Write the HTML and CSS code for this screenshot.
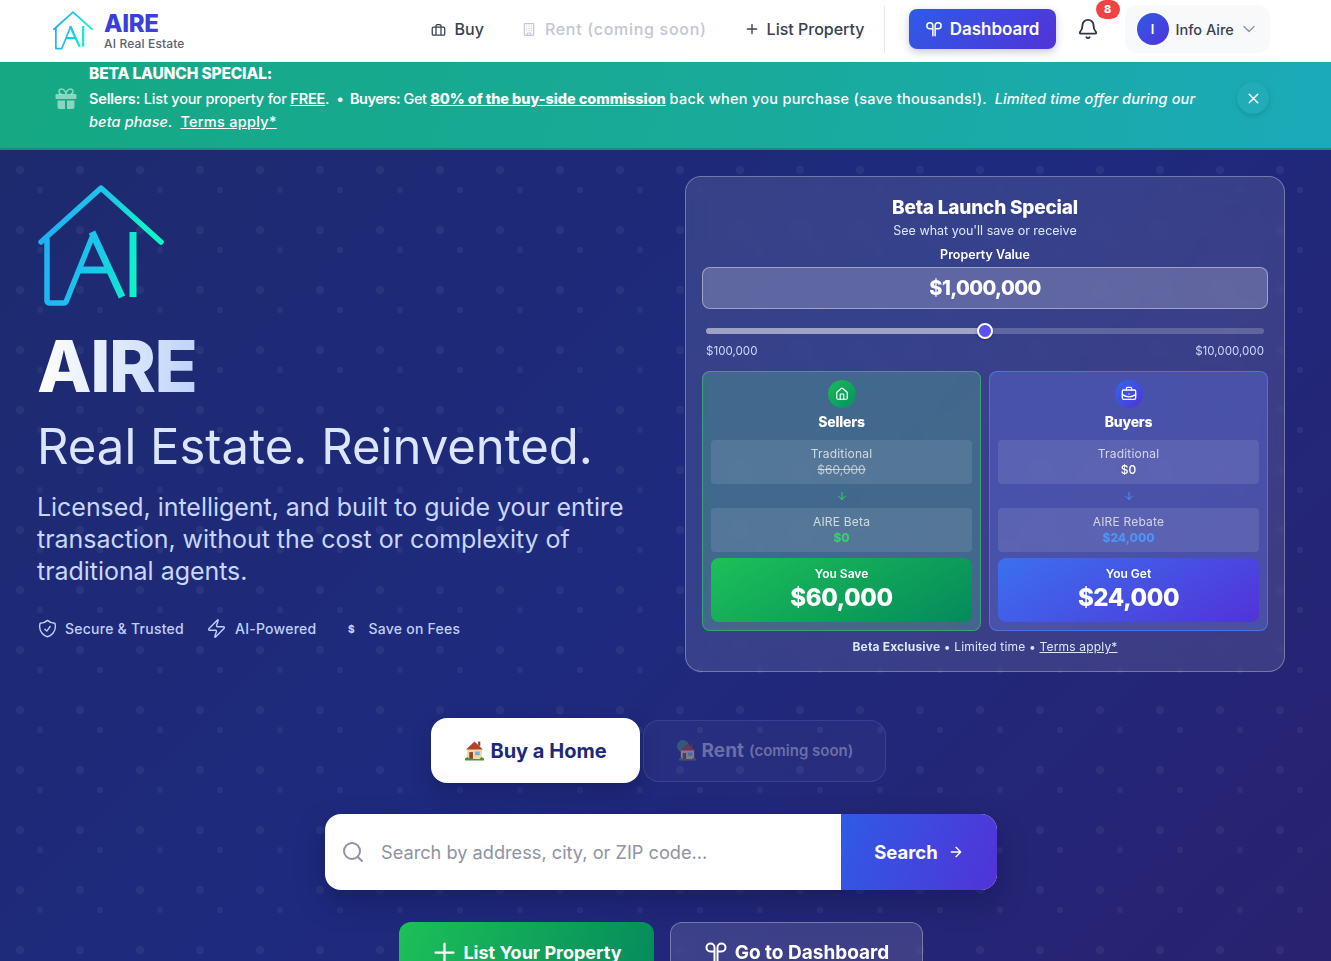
FILE: index.html
```html
<!DOCTYPE html>
<html lang="en">
<head>
    <meta charset="UTF-8">
    <meta name="viewport" content="width=device-width, initial-scale=1.0">
    <title>AIRE - AI Real Estate</title>
    <link rel="stylesheet" href="styles.css">
</head>
<body>

    <svg class="defs" width="0" height="0" aria-hidden="true">
        <defs>
            <linearGradient id="logo-grad" gradientUnits="userSpaceOnUse" x1="0" y1="60" x2="102" y2="75">
                <stop offset="0" stop-color="#1fb0f2"/>
                <stop offset="0.6" stop-color="#1cc8ea"/>
                <stop offset="1" stop-color="#0cf5c8"/>
            </linearGradient>
            <symbol id="logo-mark" viewBox="0 0 126 122">
                <g fill="none" stroke="url(#logo-grad)" stroke-width="5.5" stroke-linecap="round" stroke-linejoin="round">
                    <path d="M3 57 63 3 123 57"/>
                    <path d="M9 55V116a2 2 0 0 0 2 2H26a2 2 0 0 0 2-1L55 50"/>
                </g>
                <g fill="none" stroke="url(#logo-grad)" stroke-width="7">
                    <path d="M54 47 84 112"/>
                    <path d="M41 85H70"/>
                    <path d="M95 47V112"/>
                </g>
            </symbol>
            <symbol id="sprout" viewBox="0 0 24 24">
                <g fill="none" stroke="currentColor" stroke-width="2" stroke-linecap="round" stroke-linejoin="round">
                    <path d="M10.500 21V7.500a4 4 0 1 0-4 4h4"/>
                    <path d="M13.500 21V7.500a4 4 0 1 1 4 4h-4"/>
                </g>
            </symbol>
            <symbol id="house-emoji" viewBox="0 0 20 20">
                <rect x="13.500" y="1.500" width="2" height="4" fill="#8e3b2c"/>
                <rect x="3" y="8" width="14" height="10" fill="#f3d6a0"/>
                <path d="M10 1.500 2 9h16z" fill="#b5402f"/>
                <rect x="5" y="11.500" width="3.500" height="6.500" fill="#8a4b2d"/>
                <rect x="10.500" y="11" width="4.500" height="3.500" fill="#6fb3e0"/>
                <path d="M1 19.500a2 2 0 0 1 4-1.500h10a2 2 0 0 1 4 1.500z" fill="#4d8f3a"/>
            </symbol>
        </defs>
    </svg>

    <header class="topbar">
        <a class="brand">
            <span class="brand-logo"><svg width="40" height="39"><use href="#logo-mark"/></svg></span>
            <span class="brand-text">
                <span class="brand-name">AIRE</span>
                <span class="brand-sub">AI Real Estate</span>
            </span>
        </a>
        <nav class="nav">
            <a class="nav-link nav-buy">
                <svg class="ico" width="15" height="15" viewBox="0 0 24 24"><path d="M16 20V6a2 2 0 0 0-2-2h-4a2 2 0 0 0-2 2v14"/><rect x="2" y="8" width="20" height="13" rx="2"/></svg>
                Buy
            </a>
            <a class="nav-link nav-rent">
                <svg class="ico" width="14" height="15" viewBox="0 0 24 24"><rect x="4" y="2" width="16" height="20" rx="1"/><path d="M9 22v-4h6v4M8 6h.01M16 6h.01M12 6h.01M12 10h.01M12 14h.01M16 10h.01M16 14h.01M8 10h.01M8 14h.01"/></svg>
                Rent (coming soon)
            </a>
            <a class="nav-link nav-list">
                <svg class="ico" width="16" height="16" viewBox="0 0 24 24"><path d="M5 12h14M12 5v14"/></svg>
                List Property
            </a>
        </nav>
        <span class="nav-divider"></span>
        <a class="dash-btn"><svg width="18" height="18"><use href="#sprout"/></svg>Dashboard</a>
        <span class="bell">
            <svg class="ico" width="22" height="22" viewBox="0 0 24 24"><path d="M10.268 21a2 2 0 0 0 3.464 0"/><path d="M3.262 15.326A1 1 0 0 0 4 17h16a1 1 0 0 0 .74-1.673C19.41 13.956 18 12.499 18 8A6 6 0 0 0 6 8c0 4.499-1.411 5.956-2.738 7.326"/></svg>
            <span class="badge">8</span>
        </span>
        <div class="user">
            <span class="avatar">I</span>
            <span class="user-name">Info Aire</span>
            <svg class="ico" width="20" height="20" viewBox="0 0 24 24"><path d="m6 9 6 6 6-6"/></svg>
        </div>
    </header>

    <section class="promo">
        <svg class="promo-gift" width="24" height="24" viewBox="0 0 24 24"><rect x="1.500" y="7" width="21" height="5" rx="1"/><path d="M3.500 13.500h7.500V22H5.500a2 2 0 0 1-2-2zM13 13.500h7.500V20a2 2 0 0 1-2 2H13z"/><path class="bow" d="M7.500 7a2.500 2.500 0 0 1 0-5C10 2 12 5 12 7c0-2 2-5 4.500-5a2.500 2.500 0 0 1 0 5"/></svg>
        <div class="promo-text">
            <strong class="promo-title">BETA LAUNCH SPECIAL:</strong>
            <p>
                <span class="tight"><b>Sellers:</b> List your property for <a><b>FREE</b></a>.</span><span class="sep">•</span><span class="tighter"><b>Buyers:</b> Get</span> <a><b class="x">80% of the buy-side commission</b></a> <span class="wide">back when you purchase (save thousands!).</span> &nbsp;<em class="wide-em">Limited time offer during our</em><br>
                <em class="wide-em">beta phase.</em> &nbsp;<a class="wide">Terms apply*</a>
            </p>
        </div>
        <span class="promo-close">
            <svg class="ico" width="17" height="17" viewBox="0 0 24 24"><path d="M18 6 6 18M6 6l12 12"/></svg>
        </span>
    </section>

    <main class="hero">
        <div class="hero-top">
            <div class="hero-left">
                <svg class="hero-logo" width="126" height="122"><use href="#logo-mark"/></svg>
                <h1 class="hero-name">AIRE</h1>
                <h2 class="hero-tag">Real Estate. Reinvented.</h2>
                <p class="hero-sub">Licensed, intelligent, and built to guide your entire transaction, without the cost or complexity of traditional agents.</p>
                <ul class="features">
                    <li>
                        <svg class="ico thin" width="21" height="21" viewBox="0 0 24 24"><path d="M9 12.750 11.250 15 15 9.750m-3-7.036A11.959 11.959 0 0 1 3.598 6 11.990 11.990 0 0 0 3 9.749c0 5.592 3.824 10.290 9 11.623 5.176-1.332 9-6.030 9-11.622 0-1.310-.21-2.571-.598-3.751h-.152c-3.196 0-6.100-1.248-8.250-3.285Z"/></svg>
                        Secure &amp; Trusted
                    </li>
                    <li>
                        <svg class="ico thin" width="21" height="21" viewBox="0 0 24 24"><path d="M4 14a1 1 0 0 1-.78-1.630l9.900-10.200a.5.5 0 0 1 .86.46l-1.920 6.020A1 1 0 0 0 13 10h7a1 1 0 0 1 .78 1.630l-9.900 10.200a.5.5 0 0 1-.86-.46l1.920-6.020A1 1 0 0 0 11 14z"/></svg>
                        AI-Powered
                    </li>
                    <li>
                        <span class="dollar">$</span>
                        Save on Fees
                    </li>
                </ul>
            </div>

            <aside class="calc">
                <h3 class="calc-title">Beta Launch Special</h3>
                <p class="calc-sub">See what you'll save or receive</p>
                <div class="calc-label">Property Value</div>
                <div class="calc-value">$1,000,000</div>
                <div class="slider"><span class="slider-fill"></span><span class="slider-thumb"></span></div>
                <div class="slider-range"><span>$100,000</span><span>$10,000,000</span></div>

                <div class="compare">
                    <div class="side side-sell">
                        <span class="side-icon">
                            <svg class="ico" width="14" height="14" viewBox="0 0 24 24"><path d="M15 21v-8a1 1 0 0 0-1-1h-4a1 1 0 0 0-1 1v8"/><path d="M3 10a2 2 0 0 1 .709-1.528l7-5.999a2 2 0 0 1 2.582 0l7 5.999A2 2 0 0 1 21 10v9a2 2 0 0 1-2 2H5a2 2 0 0 1-2-2z"/></svg>
                        </span>
                        <h4>Sellers</h4>
                        <div class="line"><span>Traditional</span><s>$60,000</s></div>
                        <svg class="ico arrow" width="12" height="12" viewBox="0 0 24 24"><path d="M12 5v14M19 12l-7 7-7-7"/></svg>
                        <div class="line"><span>AIRE Beta</span><b>$0</b></div>
                        <div class="total"><span>You Save</span><strong>$60,000</strong></div>
                    </div>
                    <div class="side side-buy">
                        <span class="side-icon">
                            <svg class="ico" width="16" height="16" viewBox="0 0 24 24"><path d="M12 12h.01"/><path d="M16 6V4a2 2 0 0 0-2-2h-4a2 2 0 0 0-2 2v2"/><path d="M22 13a18.150 18.150 0 0 1-20 0"/><rect x="2" y="6" width="20" height="14" rx="2"/></svg>
                        </span>
                        <h4>Buyers</h4>
                        <div class="line"><span>Traditional</span><i>$0</i></div>
                        <svg class="ico arrow" width="12" height="12" viewBox="0 0 24 24"><path d="M12 5v14M19 12l-7 7-7-7"/></svg>
                        <div class="line"><span>AIRE Rebate</span><b>$24,000</b></div>
                        <div class="total"><span>You Get</span><strong>$24,000</strong></div>
                    </div>
                </div>
                <p class="calc-foot"><b>Beta Exclusive</b> • Limited time • <a>Terms apply*</a></p>
            </aside>
        </div>

        <div class="tabs">
            <button class="tab tab-on"><svg width="21" height="21"><use href="#house-emoji"/></svg>Buy a Home</button>
            <button class="tab tab-off">
                <svg width="21" height="21" viewBox="0 0 21 21"><circle cx="7" cy="6" r="6" fill="#3f8f7a"/><use href="#house-emoji" x="2" y="2" width="19" height="19"/></svg>
                Rent <small>(coming soon)</small>
            </button>
        </div>

        <form class="search">
            <svg class="ico" width="24" height="24" viewBox="0 0 24 24"><circle cx="11" cy="11" r="8"/><path d="m21 21-4.300-4.300"/></svg>
            <input type="text" placeholder="Search by address, city, or ZIP code...">
            <button type="button">Search <svg class="ico" width="16" height="16" viewBox="0 0 24 24"><path d="M5 12h14M12 5l7 7-7 7"/></svg></button>
        </form>

        <div class="actions">
            <a class="cta cta-green"><svg class="ico" width="27" height="27" viewBox="0 0 24 24"><path d="M4 12h16M12 4v16"/></svg>List Your Property</a>
            <a class="cta cta-ghost"><svg width="24" height="24"><use href="#sprout"/></svg>Go to Dashboard</a>
        </div>
    </main>

</body>
</html>
```

FILE: styles.css
```css
* {
    box-sizing: border-box;
}
html, body {
    height: 961px;
    overflow: hidden;
}
body {
    margin: 0;
    font-family: 'Inter', 'Liberation Sans', sans-serif;
    color: #374151;
    background-color: #1e2a78;
}
h1, h2, h3, h4, p, ul {
    margin: 0;
    padding: 0;
}
ul {
    list-style: none;
}
.defs {
    position: absolute;
}
.ico {
    fill: none;
    stroke: currentColor;
    stroke-width: 2;
    stroke-linecap: round;
    stroke-linejoin: round;
    flex: none;
}
.ico.thin {
    stroke-width: 1.600;
}

/* top bar */
.topbar {
    height: 62px;
    background-color: #fff;
    display: flex;
    align-items: center;
    padding: 0 0 4px 53px;
}
.brand {
    display: flex;
    align-items: center;
    gap: 10px;
    margin-top: 2px;
}
.brand-logo {
    width: 41px;
    height: 39px;
    display: block;
}
.brand-text {
    display: flex;
    flex-direction: column;
}
.brand-name {
    font-size: 24px;
    line-height: 26px;
    font-weight: 800;
    color: #3b3fdc;
    letter-spacing: -0.3px;
}
.brand-sub {
    font-size: 12px;
    line-height: 13px;
    font-weight: 500;
    color: #5b6270;
    letter-spacing: 0.15px;
}
.nav {
    display: flex;
    align-items: center;
    margin-left: 246px;
    gap: 38px;
}
.nav-link {
    display: flex;
    align-items: center;
    gap: 9px;
    font-size: 16px;
    font-weight: 500;
    white-space: nowrap;
}
.nav-rent {
    color: #c3c7d3;
    letter-spacing: 0.7px;
}
.nav-list {
    gap: 7px;
    margin-left: -1px;
}
.nav-divider {
    width: 1px;
    height: 47px;
    background-color: #e5e7eb;
    margin-left: 19px;
}
.dash-btn {
    width: 147px;
    height: 40px;
    margin-left: 24px;
    border-radius: 8px;
    background: linear-gradient(135deg, #2f5be6, #5133d8);
    color: #fff;
    font-size: 17px;
    font-weight: 600;
    display: flex;
    align-items: center;
    justify-content: center;
    gap: 7px;
    box-shadow: 0 3px 8px rgba(40, 40, 120, 0.25);
}
.bell {
    position: relative;
    width: 22px;
    height: 22px;
    margin-left: 21px;
    color: #2f3542;
}
.badge {
    position: absolute;
    left: 19px;
    top: -18px;
    width: 24px;
    height: 19px;
    border-radius: 10px;
    background-color: #ef4444;
    color: #fff;
    font-size: 11px;
    line-height: 19px;
    font-weight: 800;
    text-align: center;
}
.user {
    width: 145px;
    height: 48px;
    margin-left: 26px;
    border-radius: 12px;
    background-color: #f8f9fb;
    display: flex;
    align-items: center;
    padding-left: 12px;
}
.avatar {
    width: 32px;
    height: 32px;
    border-radius: 50%;
    background: linear-gradient(135deg, #2f5be6, #5133d8);
    color: #fff;
    font-size: 13px;
    font-weight: 600;
    line-height: 32px;
    text-align: center;
}
.user-name {
    margin-left: 7px;
    font-size: 14.500px;
    font-weight: 500;
    color: #374151;
}
.user .ico {
    margin-left: 5px;
    color: #8b909c;
    stroke-width: 1.500;
}

/* promo strip */
.promo {
    height: 88px;
    background: linear-gradient(100deg, #15a882, #19aa9a 55%, #1baab9);
    border-bottom: 2px solid #0f8f85;
    display: flex;
    color: #fff;
    padding-left: 54px;
    position: relative;
}
.promo-gift {
    margin-top: 25px;
    fill: rgba(255, 255, 255, 0.5);
    flex: none;
}
.promo-gift .bow {
    fill: none;
    stroke: rgba(255, 255, 255, 0.5);
    stroke-width: 1.500;
}
.promo-text {
    margin-left: 11px;
    padding-top: 1px;
    width: 1130px;
    font-size: 14.500px;
    line-height: 23px;
    font-weight: 500;
}
.promo-title {
    display: block;
    font-size: 15.500px;
    line-height: 22px;
    font-weight: 800;
    letter-spacing: -0.15px;
}
.promo-text p {
    margin-top: 2px;
    white-space: nowrap;
}
.promo-text a {
    text-decoration: underline;
}
.promo-text b {
    font-weight: 600;
}
.promo-text b.x {
    font-weight: 800;
    letter-spacing: -0.06px;
}
.tight {
    letter-spacing: -0.18px;
}
.tighter {
    letter-spacing: -0.5px;
}
.wide {
    letter-spacing: 0.28px;
}
.wide-em {
    letter-spacing: 0.12px;
}
.sep {
    margin: 0 6px 0 7px;
}
.promo-close {
    position: absolute;
    left: 1237px;
    top: 20px;
    width: 32px;
    height: 32px;
    border-radius: 50%;
    background-color: rgba(255, 255, 255, 0.03);
    box-shadow: 0 2px 5px rgba(0, 90, 100, 0.25);
    display: flex;
    align-items: center;
    justify-content: center;
}

/* hero */
.hero {
    height: 811px;
    overflow: hidden;
    padding: 26px 46px 0 37px;
    background-color: transparent;
    background-image:
        radial-gradient(circle at 20px 20px, rgba(255, 255, 255, 0.05) 4px, transparent 4.500px),
        radial-gradient(circle at 40px 40px, rgba(255, 255, 255, 0.05) 3px, transparent 3.500px),
        linear-gradient(135deg, #1e2a6e, #1e2a7e 50%, #292270);
    background-size: 60px 60px, 60px 60px, 100% 100%;
}
.hero-top {
    display: grid;
    grid-template-columns: 1fr 600px;
}
.hero-left {
    padding-top: 9px;
}
.hero-logo {
    display: block;
    margin-left: 1px;
}
.hero-name {
    margin-top: 23px;
    font-size: 71px;
    line-height: 72px;
    font-weight: 800;
    letter-spacing: -1.500px;
    width: 158px;
    background: linear-gradient(90deg, #fff, #bfd4fa);
    -webkit-background-clip: text;
    background-clip: text;
    color: transparent;
}
.hero-tag {
    margin-top: 17px;
    font-size: 49px;
    line-height: 56px;
    font-weight: 400;
    color: #dbe6fe;
}
.hero-sub {
    margin-top: 16px;
    width: 600px;
    font-size: 25px;
    line-height: 32px;
    font-weight: 400;
    letter-spacing: -0.04px;
    color: #c7d6fe;
}
.features {
    margin-top: 31px;
    display: flex;
    gap: 22px;
    font-size: 14px;
    line-height: 20px;
    font-weight: 500;
    letter-spacing: 0.25px;
    color: #bfd0fb;
}
.features li {
    display: flex;
    align-items: center;
    gap: 7px;
}
.features li:nth-child(2) {
    gap: 8px;
}
.features li:last-child {
    gap: 4px;
}
.dollar {
    width: 26px;
    font-size: 10px;
    font-weight: 800;
    text-align: center;
}

/* calculator card */
.calc {
    height: 496px;
    border: 1px solid rgba(255, 255, 255, 0.3);
    border-radius: 16px;
    background-color: rgba(255, 255, 255, 0.11);
    backdrop-filter: blur(10px);
    padding: 17px 16px 0;
    text-align: center;
    color: #fff;
}
.calc-title {
    font-size: 19px;
    line-height: 28px;
    font-weight: 800;
    letter-spacing: -0.2px;
}
.calc-sub {
    margin-top: -1px;
    font-size: 12.500px;
    line-height: 20px;
    color: #dbe6fe;
}
.calc-label {
    margin-top: 4px;
    font-size: 12.500px;
    line-height: 20px;
    font-weight: 600;
}
.calc-value {
    margin-top: 2px;
    height: 42px;
    border: 1px solid rgba(255, 255, 255, 0.4);
    border-radius: 8px;
    background-color: rgba(255, 255, 255, 0.2);
    font-size: 20px;
    line-height: 40px;
    font-weight: 800;
    letter-spacing: -0.6px;
}
.slider {
    position: relative;
    height: 6px;
    margin: 19px 4px 0;
    border-radius: 3px;
    background-color: rgba(255, 255, 255, 0.2);
}
.slider-fill {
    display: block;
    width: 50%;
    height: 100%;
    border-radius: 3px;
    background-color: rgba(255, 255, 255, 0.4);
}
.slider-thumb {
    position: absolute;
    left: 271px;
    top: -5px;
    width: 16px;
    height: 16px;
    border: 2px solid #fff;
    border-radius: 50%;
    background-color: #5b50f0;
    box-shadow: 0 1px 3px rgba(0, 0, 0, 0.3);
}
.slider-range {
    display: flex;
    justify-content: space-between;
    margin: 8px 4px 0;
    font-size: 11.600px;
    line-height: 18px;
    color: #c7d6fe;
}
.compare {
    display: grid;
    grid-template-columns: 1fr 1fr;
    gap: 8px;
    margin-top: 11px;
}
.side {
    height: 260px;
    border: 1px solid;
    border-radius: 8px;
    padding: 7px 8px 0;
}
.side-sell {
    background-color: rgba(89, 200, 147, 0.3);
    border-color: rgba(60, 200, 110, 0.6);
}
.side-buy {
    background-color: rgba(109, 127, 247, 0.3);
    border-color: rgba(80, 130, 250, 0.7);
}
.side-icon {
    display: flex;
    align-items: center;
    justify-content: center;
    width: 28px;
    height: 28px;
    margin: 1px auto 0;
    border-radius: 50%;
    background: linear-gradient(135deg, #1cba5a, #059060);
}
.side-buy .side-icon {
    background: linear-gradient(135deg, #2f6ae6, #5133d8);
}
.side h4 {
    margin: 4px 0 8px;
    font-size: 14px;
    line-height: 20px;
    font-weight: 800;
    letter-spacing: -0.2px;
}
.line {
    height: 44px;
    border-radius: 4px;
    background-color: rgba(255, 255, 255, 0.1);
    padding-top: 6px;
    font-size: 12px;
    line-height: 16px;
}
.line span {
    display: block;
    color: rgba(255, 255, 255, 0.72);
    letter-spacing: 0.2px;
}
.line s {
    color: rgba(255, 255, 255, 0.6);
}
.line i {
    font-style: normal;
    font-weight: 500;
}
.line b {
    font-weight: 800;
}
.side-sell .line b, .side-sell .arrow {
    color: #34d16e;
}
.side-buy .line b, .side-buy .arrow {
    color: #4f93f5;
}
.arrow {
    display: block;
    margin: 6px auto;
}
.total {
    height: 64px;
    margin-top: 6px;
    border-radius: 8px;
    background: linear-gradient(150deg, #1cc058, #058a5c);
    padding-top: 8px;
}
.side-buy .total {
    background: linear-gradient(150deg, #3b70f0, #5133d8);
}
.total span {
    display: block;
    font-size: 12px;
    line-height: 16px;
    font-weight: 600;
}
.total strong {
    display: block;
    font-size: 24px;
    line-height: 31px;
    font-weight: 800;
    letter-spacing: -0.4px;
}
.calc-foot {
    margin-top: 7px;
    font-size: 12px;
    line-height: 18px;
    letter-spacing: 0.18px;
    color: #dbe6fe;
}
.calc-foot b {
    font-weight: 700;
}
.calc-foot a {
    text-decoration: underline;
}

/* search area */
.tabs {
    display: flex;
    justify-content: center;
    align-items: center;
    gap: 3px;
    margin-top: 46px;
    width: 1243px;
}
.tab {
    border: 0;
    font-family: inherit;
    font-size: 20px;
    font-weight: 700;
    display: flex;
    align-items: center;
    justify-content: center;
    gap: 5px;
    border-radius: 16px;
}
.tab-on {
    width: 209px;
    height: 65px;
    background-color: #fff;
    color: #1e2a78;
    box-shadow: 0 8px 20px rgba(10, 15, 60, 0.3);
}
.tab-off {
    width: 243px;
    height: 62px;
    font-size: 19px;
    background-color: rgba(255, 255, 255, 0.03);
    border: 1px solid rgba(120, 140, 255, 0.2);
    color: rgba(255, 255, 255, 0.33);
}
.tab-off svg {
    opacity: 0.45;
}
.tab-off small {
    font-size: 15px;
    font-weight: 600;
}
.search {
    display: flex;
    align-items: center;
    width: 672px;
    height: 76px;
    margin: 31px 0 0 288px;
    border-radius: 16px;
    background-color: #fff;
    color: #8f93a3;
    overflow: hidden;
    padding-left: 16px;
    box-shadow: 0 12px 28px rgba(10, 15, 60, 0.35);
}
.search input {
    flex: 1;
    min-width: 0;
    border: 0;
    margin-left: 14px;
    font-family: inherit;
    font-size: 18.200px;
    outline: none;
    background: none;
}
.search input::placeholder {
    color: #8f93a3;
}
.search button {
    width: 156px;
    height: 100%;
    border: 0;
    background: linear-gradient(110deg, #2f5be6, #5133d8);
    color: #fff;
    font-family: inherit;
    font-size: 18.500px;
    font-weight: 700;
    display: flex;
    align-items: center;
    justify-content: center;
    gap: 10px;
}
.actions {
    display: flex;
    gap: 16px;
    margin: 32px 0 0 362px;
    color: #fff;
}
.cta {
    width: 255px;
    height: 60px;
    border-radius: 12px;
    display: flex;
    align-items: center;
    justify-content: center;
    gap: 5px;
    font-size: 18px;
    font-weight: 700;
}
.cta-green {
    background: linear-gradient(110deg, #1cc058, #058a5c);
}
.cta-ghost {
    width: 253px;
    gap: 7px;
    font-size: 19px;
    background-color: rgba(255, 255, 255, 0.12);
    border: 1px solid rgba(255, 255, 255, 0.3);
    backdrop-filter: blur(10px);
}
```
